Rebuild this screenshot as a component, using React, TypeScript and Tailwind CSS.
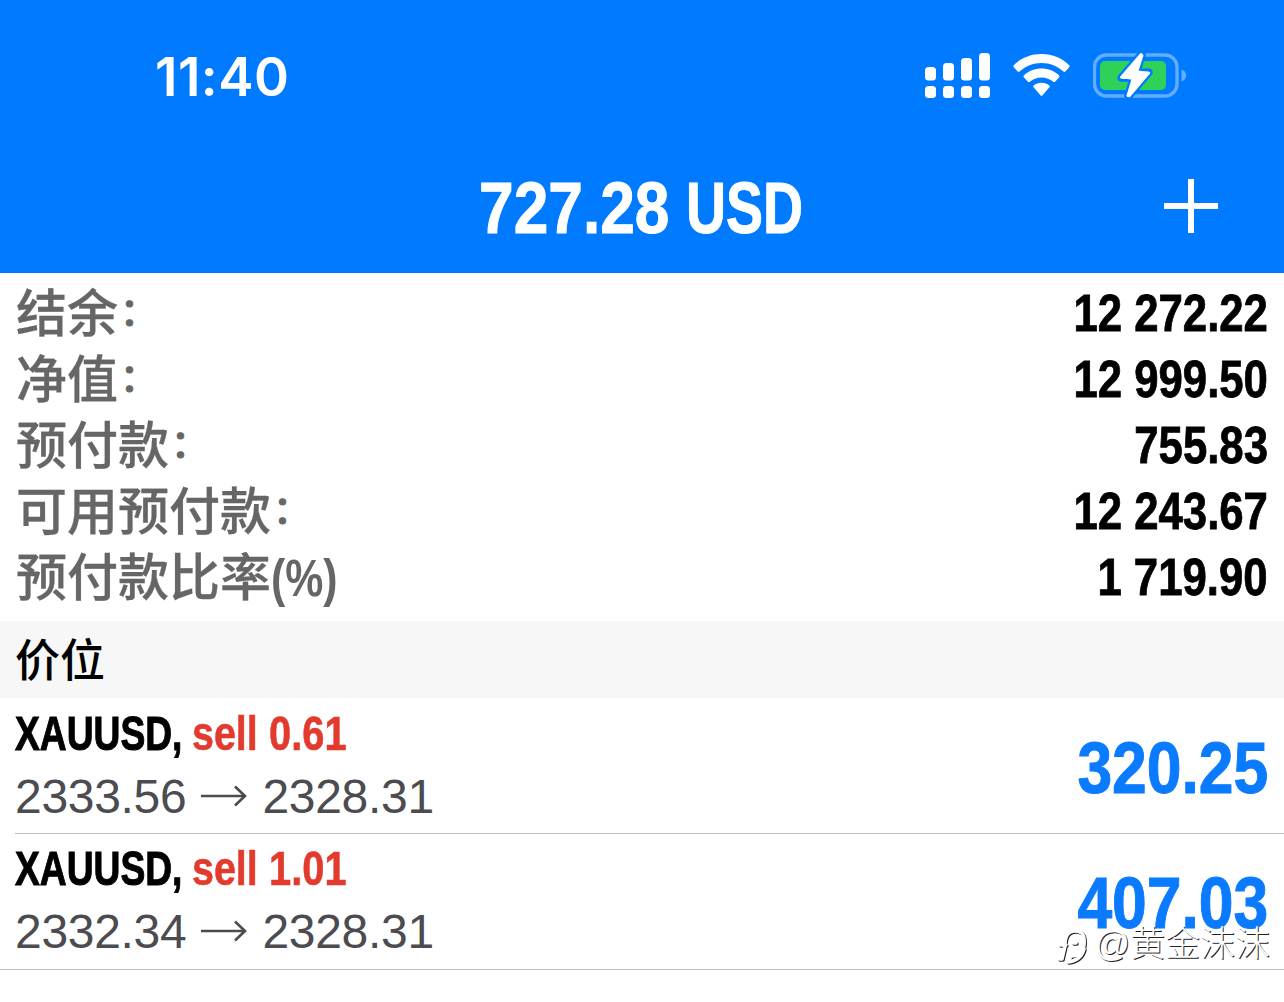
import clsx from "clsx";

const stats = [
  { label: "结余", colon: true, value: "12 272.22" },
  { label: "净值", colon: true, value: "12 999.50" },
  { label: "预付款", colon: true, value: "755.83" },
  { label: "可用预付款", colon: true, value: "12 243.67" },
  { label: "预付款比率", suffix: "(%)", value: "1 719.90" },
];

const positions = [
  { symbol: "XAUUSD,", side: "sell", volume: "0.61", open: "2333.56", current: "2328.31", profit: "320.25" },
  { symbol: "XAUUSD,", side: "sell", volume: "1.01", open: "2332.34", current: "2328.31", profit: "407.03" },
];

// Text squeezed horizontally, the wrapper keeps the narrow width in the flow
function Narrow({ text, width, className }: { text: string; width: string; className: string }) {
  return (
    <span className={clsx("flex shrink-0", width)}>
      <span className={clsx("block origin-left whitespace-nowrap", className)}>{text}</span>
    </span>
  );
}

function Signal() {
  return (
    <svg className="h-[46px] w-[67px]" viewBox="0 0 67 46" fill="#fff">
      <rect x="0" y="14" width="11" height="13.5" rx="3.5" />
      <rect x="18" y="10" width="11" height="17.5" rx="3.5" />
      <rect x="36" y="5" width="11" height="22.5" rx="3.5" />
      <rect x="54" y="0" width="11" height="27.5" rx="3.5" />
      <rect x="0" y="33" width="11" height="12" rx="3.5" />
      <rect x="18" y="33" width="11" height="12" rx="3.5" />
      <rect x="36" y="33" width="11" height="12" rx="3.5" />
      <rect x="54" y="33" width="11" height="12" rx="3.5" />
    </svg>
  );
}

function Wifi() {
  return (
    <svg className="h-[44px] w-[58px]" viewBox="0 0 58 44" fill="#fff">
      <path d="M28.5 0C17.500 0 7.500 4.200 0.800 11.300Q-0.100 12.300 0.800 13.200L4.700 17.500Q5.600 18.400 6.600 17.500C12.300 12.100 20 8.900 28.500 8.900S44.700 12.100 50.400 17.500Q51.400 18.400 52.300 17.500L56.200 13.200Q57.100 12.300 56.200 11.300C49.500 4.200 39.500 0 28.500 0Z" />
      <path d="M28.500 14.500C21.700 14.500 15.500 17.100 10.900 21.400Q9.900 22.300 10.800 23.200L14.900 27.700Q15.800 28.500 16.800 27.700C19.900 25 24 23.400 28.500 23.400S37.100 25 40.200 27.700Q41.200 28.500 42.100 27.700L46.200 23.200Q47.100 22.300 46.100 21.400C41.500 17.100 35.300 14.500 28.500 14.500Z" />
      <path d="M28.500 28.700C25.500 28.700 22.800 29.700 20.700 31.400Q19.600 32.300 20.600 33.300L27.400 41.200Q28.500 42.200 29.600 41.200L36.400 33.300Q37.400 32.300 36.300 31.400C34.200 29.700 31.500 28.700 28.500 28.700Z" />
    </svg>
  );
}

function Battery() {
  return (
    <svg className="h-[48px] w-[94px]" viewBox="0 0 94 48">
      <rect x="1.500" y="3" width="82.500" height="41" rx="12" fill="none" stroke="#62adff" strokeWidth="3.400" />
      <path d="M88.500 17.500C91.500 18.500 93.200 20.500 93.200 23.300S91.500 28.500 88.500 29.500Z" fill="#62adff" />
      <rect x="7" y="9" width="66" height="29" rx="5" fill="#30d158" />
      <path
        d="M47.800 1.700L27.600 25.300Q26.800 26.700 28.400 26.800L39.300 27L34.200 43.700Q34 46.500 36.500 44.600L56.500 21Q57.200 19.500 55.600 19.400L44.700 19.200L49.700 3.500Q49.900 0.300 47.800 1.700Z"
        fill="#fff"
        stroke="#007aff"
        strokeWidth="6"
        strokeLinejoin="round"
        paintOrder="stroke"
      />
      <path d="M47.800 1.700L27.600 25.300L39.300 27L34.200 43.700L36.500 44.600L56.500 21L44.700 19.200L49.700 3.500Z" fill="#fff" stroke="#fff" strokeWidth="1.500" strokeLinejoin="round" />
    </svg>
  );
}

function Watermark() {
  return (
    <div className="absolute right-[14px] top-[921px] flex items-center gap-[6px] text-white">
      <svg className="mt-[6px] h-[40px] w-[32px] drop-shadow-[1px_1px_0_#222]" viewBox="0 0 32 40" fill="none" stroke="#fff" strokeWidth="3.500" strokeLinecap="round" strokeLinejoin="round">
        <path d="M3 32H6L9 19M4 18H10M9 18C9 9 13 4 19 4C27 4 29 9 28 18C27 27 21 29 15 29L12 35C20 34 26 30 28 22M17 16H20" />
      </svg>
      <span className="text-[35px] font-light leading-[44px] [text-shadow:1px_1px_0.5px_#222]">@黄金沫沫</span>
    </div>
  );
}

export default function App() {
  return (
    <div className="relative h-[1002px] w-[1284px] overflow-hidden bg-white font-['Liberation_Sans','Noto_Sans_CJK_SC',sans-serif]">
      <header className="h-[273px] bg-[#007aff] text-white">
        <div className="flex h-[152px] items-center justify-between pl-[155px] pr-[97px]">
          <span className="pt-1 font-['Inter',sans-serif] text-[53px] font-semibold tracking-[0.5px]">11:40</span>
          <div className="flex items-center">
            <Signal />
            <div className="ml-[21px]">
              <Wifi />
            </div>
            <div className="ml-[22px]">
              <Battery />
            </div>
          </div>
        </div>
        <div className="flex h-[109px] items-center pl-[479px] pr-[66px] text-[73px] font-bold leading-none [-webkit-text-stroke:1px_#fff]">
          <Narrow text="727.28" width="w-[207px]" className="scale-x-[0.853] pt-[2px]" />
          <Narrow text="USD" width="w-[118px]" className="scale-x-[0.76] pt-[2px]" />
          <svg className="mb-px ml-auto h-[54px] w-[54px]" viewBox="0 0 54 54" stroke="#fff" strokeWidth="6">
            <path d="M27 0V54M0 27H54" />
          </svg>
        </div>
      </header>

      <section className="h-[348px] px-4 pt-[8px]">
        {stats.map((s) => (
          <div key={s.label} className="flex h-[66px] items-center justify-between text-[51px] leading-[66px]">
            <div className="flex pt-px font-medium text-[#666] [-webkit-text-stroke:0.3px_#666]">
              {s.label}
              {s.colon && <span className="relative -top-[3px] left-[2px] text-[38px] [-webkit-text-stroke:1px_#666]">：</span>}
              {s.suffix && (
                <span className="block origin-left scale-x-[0.84] font-bold [-webkit-text-stroke:0]">{s.suffix}</span>
              )}
            </div>
            <span className="block origin-right scale-x-[0.857] font-bold text-black [-webkit-text-stroke:0.8px_#000]">{s.value}</span>
          </div>
        ))}
      </section>

      <h2 className="h-[77px] bg-[#f7f7f7] px-[15px] pt-[2px] text-[45px] font-medium leading-[77px] text-black">价位</h2>

      {positions.map((p, i) => (
        <div key={p.profit} className={clsx("flex h-[136px]", i === 0 && "pl-[15px]")}>
          <div className={clsx("flex flex-1 items-center justify-between border-b border-[#c2c2c4] pr-4", i > 0 && "pb-[2px] pl-[15px]")}>
            <div className="pb-[2px]">
              <div className="flex h-[64px] items-center text-[48px] font-bold leading-none">
                <Narrow text={p.symbol} width="w-[177px]" className="scale-x-[0.775] text-black [-webkit-text-stroke:1px_#000]" />
                <Narrow text={p.side} width="w-[77px]" className="scale-x-[0.82] text-[#e23b2e] [-webkit-text-stroke:0.6px_#e23b2e]" />
                <Narrow text={p.volume} width="w-[80px]" className="scale-x-[0.83] text-[#e23b2e] [-webkit-text-stroke:0.6px_#e23b2e]" />
              </div>
              <div className="flex h-[62px] items-center text-[48px] leading-none tracking-[-0.3px] text-[#4b4b50]">
                {p.open}
                <svg className="mx-[15px] mb-[2px] h-[22px] w-[46px]" viewBox="0 0 46 22" fill="none" stroke="#4b4b50" strokeWidth="2.600">
                  <path d="M0 11H44M34 1.500L44 11L34 20.500" />
                </svg>
                {p.current}
              </div>
            </div>
            <span className="block origin-right scale-x-[0.855] pt-[3px] text-[73px] font-bold leading-none text-[#0a7bff] [-webkit-text-stroke:1px_#0a7bff]">
              {p.profit}
            </span>
          </div>
        </div>
      ))}

      <Watermark />
    </div>
  );
}
